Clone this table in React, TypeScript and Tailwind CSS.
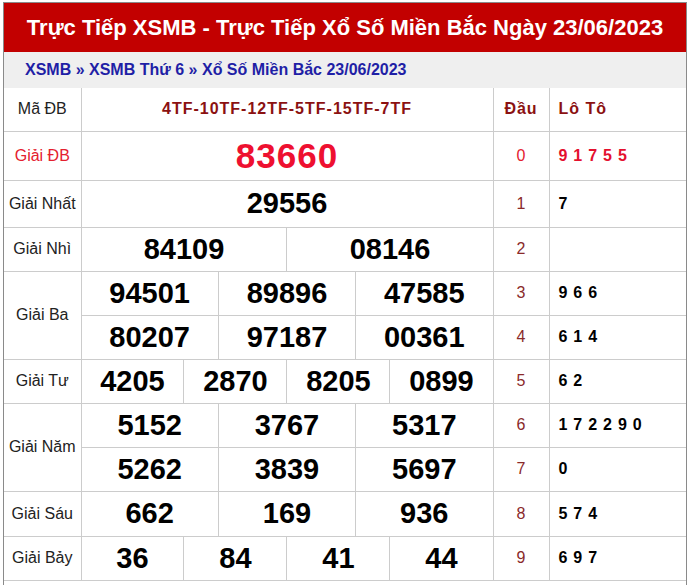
import React from "react";

const FONT = { fontFamily: '"Liberation Sans", Arial, sans-serif' };

type Row = {
  label?: string;
  labelSpan?: number;
  nums: string[];
  dau: string;
  loto: string;
  h: string;
  special?: boolean;
};

const ROWS: Row[] = [
  { label: "Giải ĐB", nums: ["83660"], dau: "0", loto: "9 1 7 5 5", h: "h-[49px]", special: true },
  { label: "Giải Nhất", nums: ["29556"], dau: "1", loto: "7", h: "h-[47px]" },
  { label: "Giải Nhì", nums: ["84109", "08146"], dau: "2", loto: "", h: "h-[44px]" },
  { label: "Giải Ba", labelSpan: 2, nums: ["94501", "89896", "47585"], dau: "3", loto: "9 6 6", h: "h-[44px]" },
  { nums: ["80207", "97187", "00361"], dau: "4", loto: "6 1 4", h: "h-[44px]" },
  { label: "Giải Tư", nums: ["4205", "2870", "8205", "0899"], dau: "5", loto: "6 2", h: "h-[44px]" },
  { label: "Giải Năm", labelSpan: 2, nums: ["5152", "3767", "5317"], dau: "6", loto: "1 7 2 2 9 0", h: "h-[44px]" },
  { nums: ["5262", "3839", "5697"], dau: "7", loto: "0", h: "h-[44px]" },
  { label: "Giải Sáu", nums: ["662", "169", "936"], dau: "8", loto: "5 7 4", h: "h-[45px]" },
  { label: "Giải Bảy", nums: ["36", "84", "41", "44"], dau: "9", loto: "6 9 7", h: "h-[44px]" },
];

const cell = "border border-[#cccccc] p-0";

export default function App() {
  return (
    <div className="bg-white min-h-screen pt-[2px] pl-[3px]" style={FONT}>
      <div className="w-[684px] border border-[#8a8a8a] border-b-0">
        <div className="h-[49px] bg-[#c20000] flex items-center justify-center text-white font-bold text-[22px]">
          Trực Tiếp XSMB - Trực Tiếp Xổ Số Miền Bắc Ngày 23/06/2023
        </div>
        <div className="h-[36px] bg-[#efefef] flex items-center pl-[21px] text-[16px] font-bold text-[#1f1fa6]">
          XSMB » XSMB Thứ 6 » Xổ Số Miền Bắc 23/06/2023
        </div>
        <table className="w-[682px] table-fixed border-collapse">
          <colgroup>
            <col className="w-[77px]" />
            {Array.from({ length: 12 }).map((_, i) => (
              <col key={i} />
            ))}
            <col className="w-[56px]" />
            <col className="w-[137px]" />
          </colgroup>
          <tbody>
            <tr className="h-[43px]">
              <td className={cell + " border-t-0 border-l-0 text-center text-[16px] text-[#222]"}>Mã ĐB</td>
              <td colSpan={12} className={cell + " border-t-0 text-center text-[16px] font-bold tracking-[1px] text-[#8b1111]"}>
                4TF-10TF-12TF-5TF-15TF-7TF
              </td>
              <td className={cell + " border-t-0 text-center text-[16px] font-bold tracking-[1px] text-[#8b1111]"}>Đầu</td>
              <td className={cell + " border-t-0 border-r-0 pl-[9px] text-[16px] font-bold tracking-[1px] text-[#8b1111]"}>Lô Tô</td>
            </tr>
            {ROWS.map((r, i) => {
              const span = 12 / r.nums.length;
              return (
                <tr key={i} className={r.h}>
                  {r.label && (
                    <td
                      rowSpan={r.labelSpan || 1}
                      className={
                        cell +
                        " border-l-0 text-center text-[16px] " +
                        (r.special ? "text-[#e4202e]" : "text-[#222]")
                      }
                    >
                      {r.label}
                    </td>
                  )}
                  {r.nums.map((n, j) => (
                    <td
                      key={j}
                      colSpan={span}
                      className={
                        cell +
                        " text-center font-bold leading-none " +
                        (r.special ? "text-[35px] tracking-[1px] text-[#ee1030]" : "text-[29px] text-black")
                      }
                    >
                      {n}
                    </td>
                  ))}
                  <td
                    className={
                      cell +
                      " text-center text-[16px] " +
                      (r.special ? "text-[#e4202e]" : "text-[#8a2a2a]")
                    }
                  >
                    {r.dau}
                  </td>
                  <td
                    className={
                      cell +
                      " border-r-0 pl-[9px] text-[16px] font-bold tracking-[0.75px] " +
                      (r.special ? "text-[#e4102e]" : "text-black")
                    }
                  >
                    {r.loto}
                  </td>
                </tr>
              );
            })}
          </tbody>
        </table>
        <div className="h-[40px]" />
      </div>
    </div>
  );
}
